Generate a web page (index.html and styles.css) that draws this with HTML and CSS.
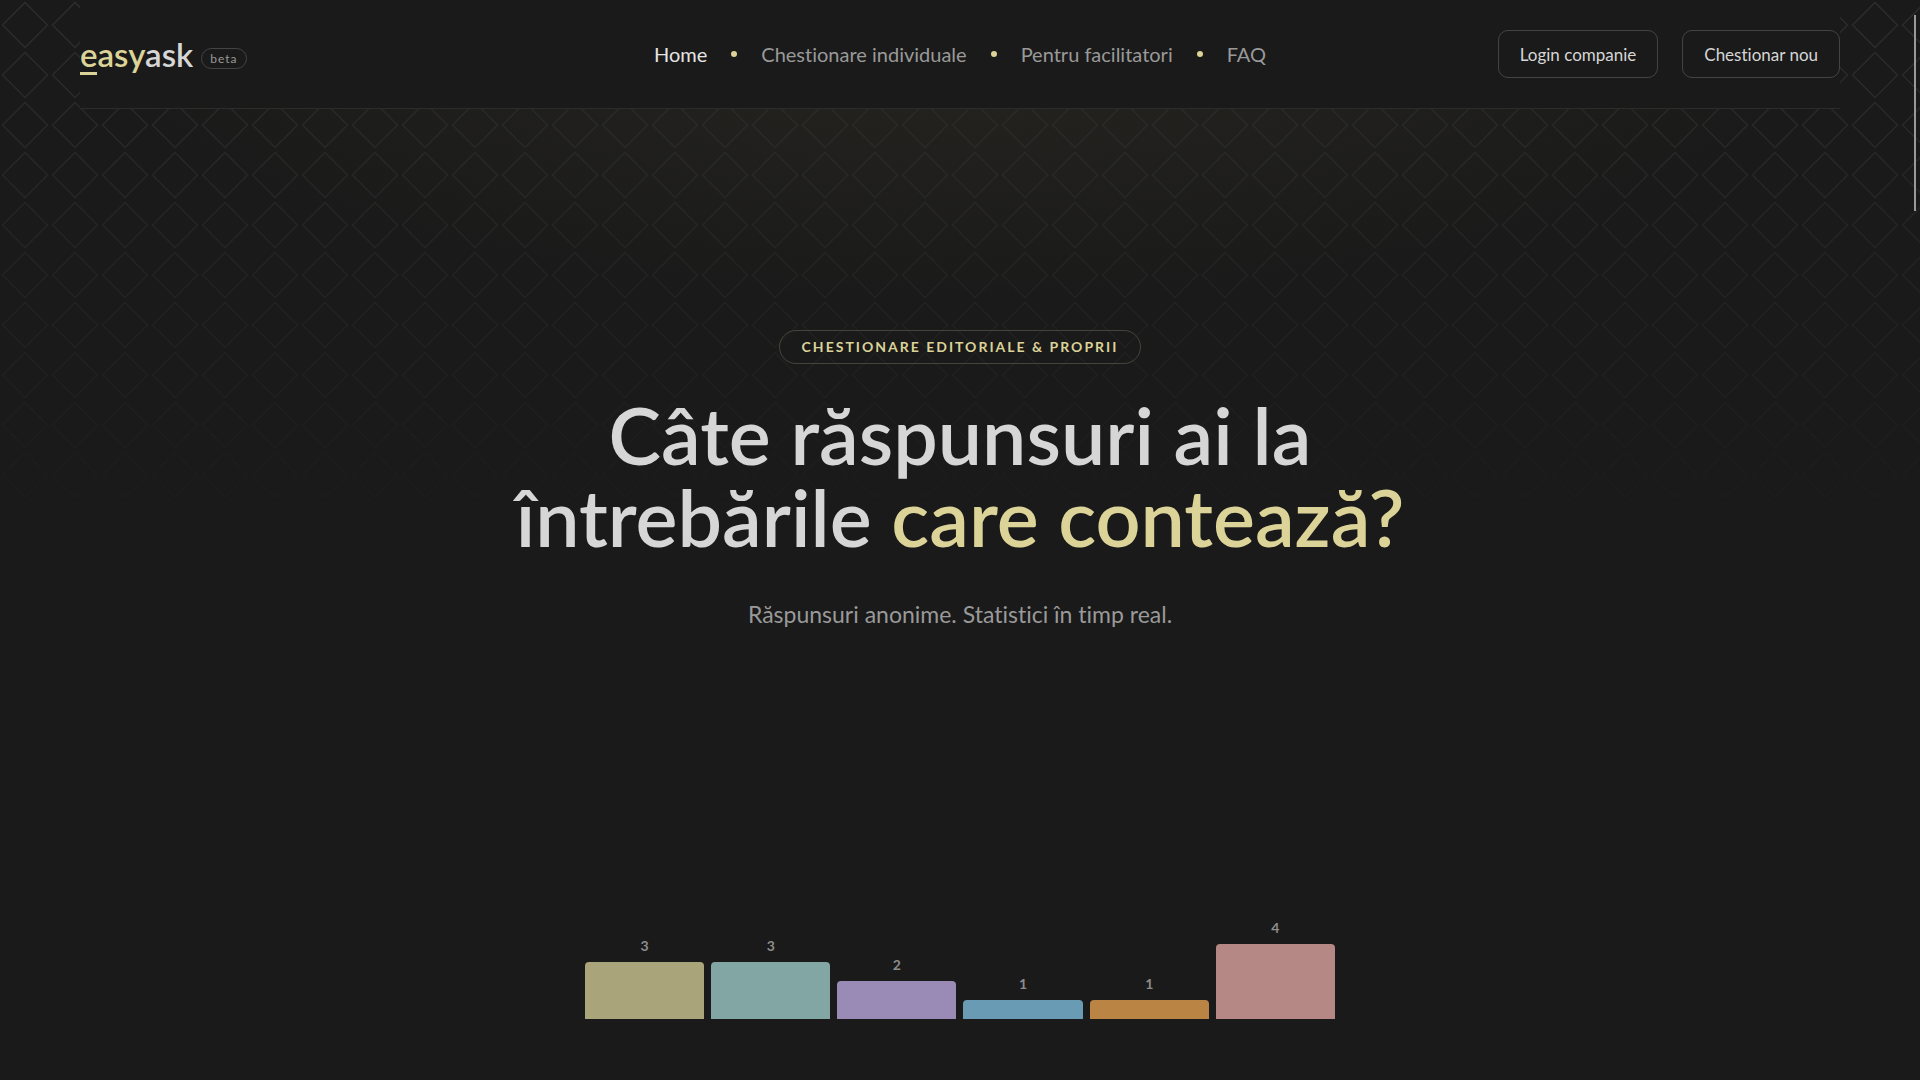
FILE: index.html
```html
<!DOCTYPE html>
<html lang="ro">
<head>
<meta charset="utf-8">
<meta name="viewport" content="width=device-width, initial-scale=1">
<title>easyask</title>
<link rel="stylesheet" href="styles.css">
</head>
<body>
<svg class="backdrop" aria-hidden="true">
  <defs>
    <pattern id="diamonds" width="50" height="50" patternUnits="userSpaceOnUse">
      <path d="M25 2.5 47.5 25 25 47.5 2.5 25Z" fill="none" stroke="#2d2d2d" stroke-width="1.3"/>
    </pattern>
  </defs>
  <rect width="100%" height="100%" fill="url(#diamonds)"/>
</svg>
<header class="header">
  <a class="logo" href="#"><span class="logo-name"><span class="accent">easy</span>ask</span><span class="beta">beta</span></a>
  <nav class="nav">
    <a class="nav-link current" href="#">Home</a>
    <a class="nav-link" href="#">Chestionare individuale</a>
    <a class="nav-link" href="#">Pentru facilitatori</a>
    <a class="nav-link" href="#">FAQ</a>
  </nav>
  <div class="actions">
    <button class="button" type="button">Login companie</button>
    <button class="button" type="button">Chestionar nou</button>
  </div>
</header>
<main class="hero">
  <p class="tag">CHESTIONARE EDITORIALE &amp; PROPRII</p>
  <h1 class="title">Câte răspunsuri ai la<br>întrebările <span class="accent">care contează?</span></h1>
  <p class="subtitle">Răspunsuri anonime. Statistici în timp real.</p>
  <div class="chart">
    <div class="column"><span>3</span><div class="bar olive" style="height:57px"></div></div>
    <div class="column"><span>3</span><div class="bar teal" style="height:57px"></div></div>
    <div class="column"><span>2</span><div class="bar purple" style="height:38px"></div></div>
    <div class="column"><span>1</span><div class="bar blue" style="height:19px"></div></div>
    <div class="column"><span>1</span><div class="bar orange" style="height:19px"></div></div>
    <div class="column"><span>4</span><div class="bar rose" style="height:75px"></div></div>
  </div>
</main>
<div class="scroll-thumb"></div>
</body>
</html>
```
FILE: styles.css
```css
* { box-sizing: border-box; }
body {
  margin: 0;
  min-height: 100vh;
  position: relative;
  overflow: hidden;
  background: radial-gradient(ellipse 900px 300px at 50% 0, #272621, #1a1a1a) #1a1a1a;
  color: #d6d6d6;
  font-family: Lato, "Open Sans", sans-serif;
  font-variant-ligatures: none;
}
p, h1 { margin: 0; }
a { color: inherit; text-decoration: none; }
.accent { color: #dbd397; }

.backdrop {
  position: absolute;
  inset: 0;
  z-index: -1;
  width: 100%;
  height: 560px;
  mask-image: linear-gradient(#000, transparent);
}

.header {
  display: grid;
  grid-template-columns: 1fr auto 1fr;
  align-items: center;
  height: 109px;
  margin: 0 80px;
  background: #1a1a1a;
  border-bottom: 1px solid #2c2c2b;
}
.logo { display: flex; align-items: center; gap: 8px; }
.logo-name {
  position: relative;
  font-size: 33px;
  line-height: 40px;
  font-weight: 600;
}
.logo-name::after {
  content: "";
  position: absolute;
  left: 0;
  bottom: -1px;
  width: 17px;
  height: 3px;
  background: #dbd397;
}
.beta {
  padding: 0 8px;
  margin-top: 8px;
  border: 1px solid #444;
  border-radius: 11px;
  color: #999;
  font-size: 12px;
  line-height: 19px;
  letter-spacing: 1px;
}
.nav { display: flex; align-items: center; gap: 24px; font-size: 20px; line-height: 24px; color: #999; }
.nav-link { display: flex; align-items: center; gap: 24px; }
.nav-link + .nav-link::before {
  content: "";
  width: 6px;
  height: 6px;
  border-radius: 50%;
  background: #dbd397;
}
.current { color: #e4e4e4; }
.actions { display: flex; justify-content: flex-end; gap: 24px; }
.button {
  height: 48px;
  padding: 0 21px;
  border: 1px solid #444;
  border-radius: 10px;
  background: none;
  color: #d6d6d6;
  font: 17px Lato, "Open Sans", sans-serif;
  font-variant-ligatures: none;
}

.hero {
  display: flex;
  flex-direction: column;
  align-items: center;
  padding: 221px 24px 60px;
  text-align: center;
}
.tag {
  padding: 0 22px;
  border: 1px solid #46443a;
  border-radius: 17px;
  color: #dbd397;
  font-size: 14px;
  line-height: 32px;
  font-weight: 700;
  letter-spacing: 2px;
}
.title {
  margin-top: 30px;
  font-size: 79px;
  line-height: 82px;
  font-weight: 600;
}
.subtitle {
  margin-top: 40px;
  color: #999;
  font-size: 23px;
  line-height: 32px;
}
.chart {
  display: grid;
  grid-template-columns: repeat(6, 1fr);
  align-items: end;
  gap: 7px;
  width: 100%;
  max-width: 750px;
  height: 389px;
}
.column {
  display: grid;
  gap: 6px;
  color: #8c8c8c;
  font-size: 14px;
  line-height: 20px;
  font-weight: 700;
}
.bar { border-radius: 4px 4px 0 0; }
.olive { background: #aaa47a; }
.teal { background: #81a6a3; }
.purple { background: #998bb6; }
.blue { background: #6a9bb5; }
.orange { background: #ba8444; }
.rose { background: #b58886; }

.scroll-thumb {
  position: absolute;
  top: 15px;
  right: 4px;
  width: 2px;
  height: 196px;
  background: #999;
}
```
